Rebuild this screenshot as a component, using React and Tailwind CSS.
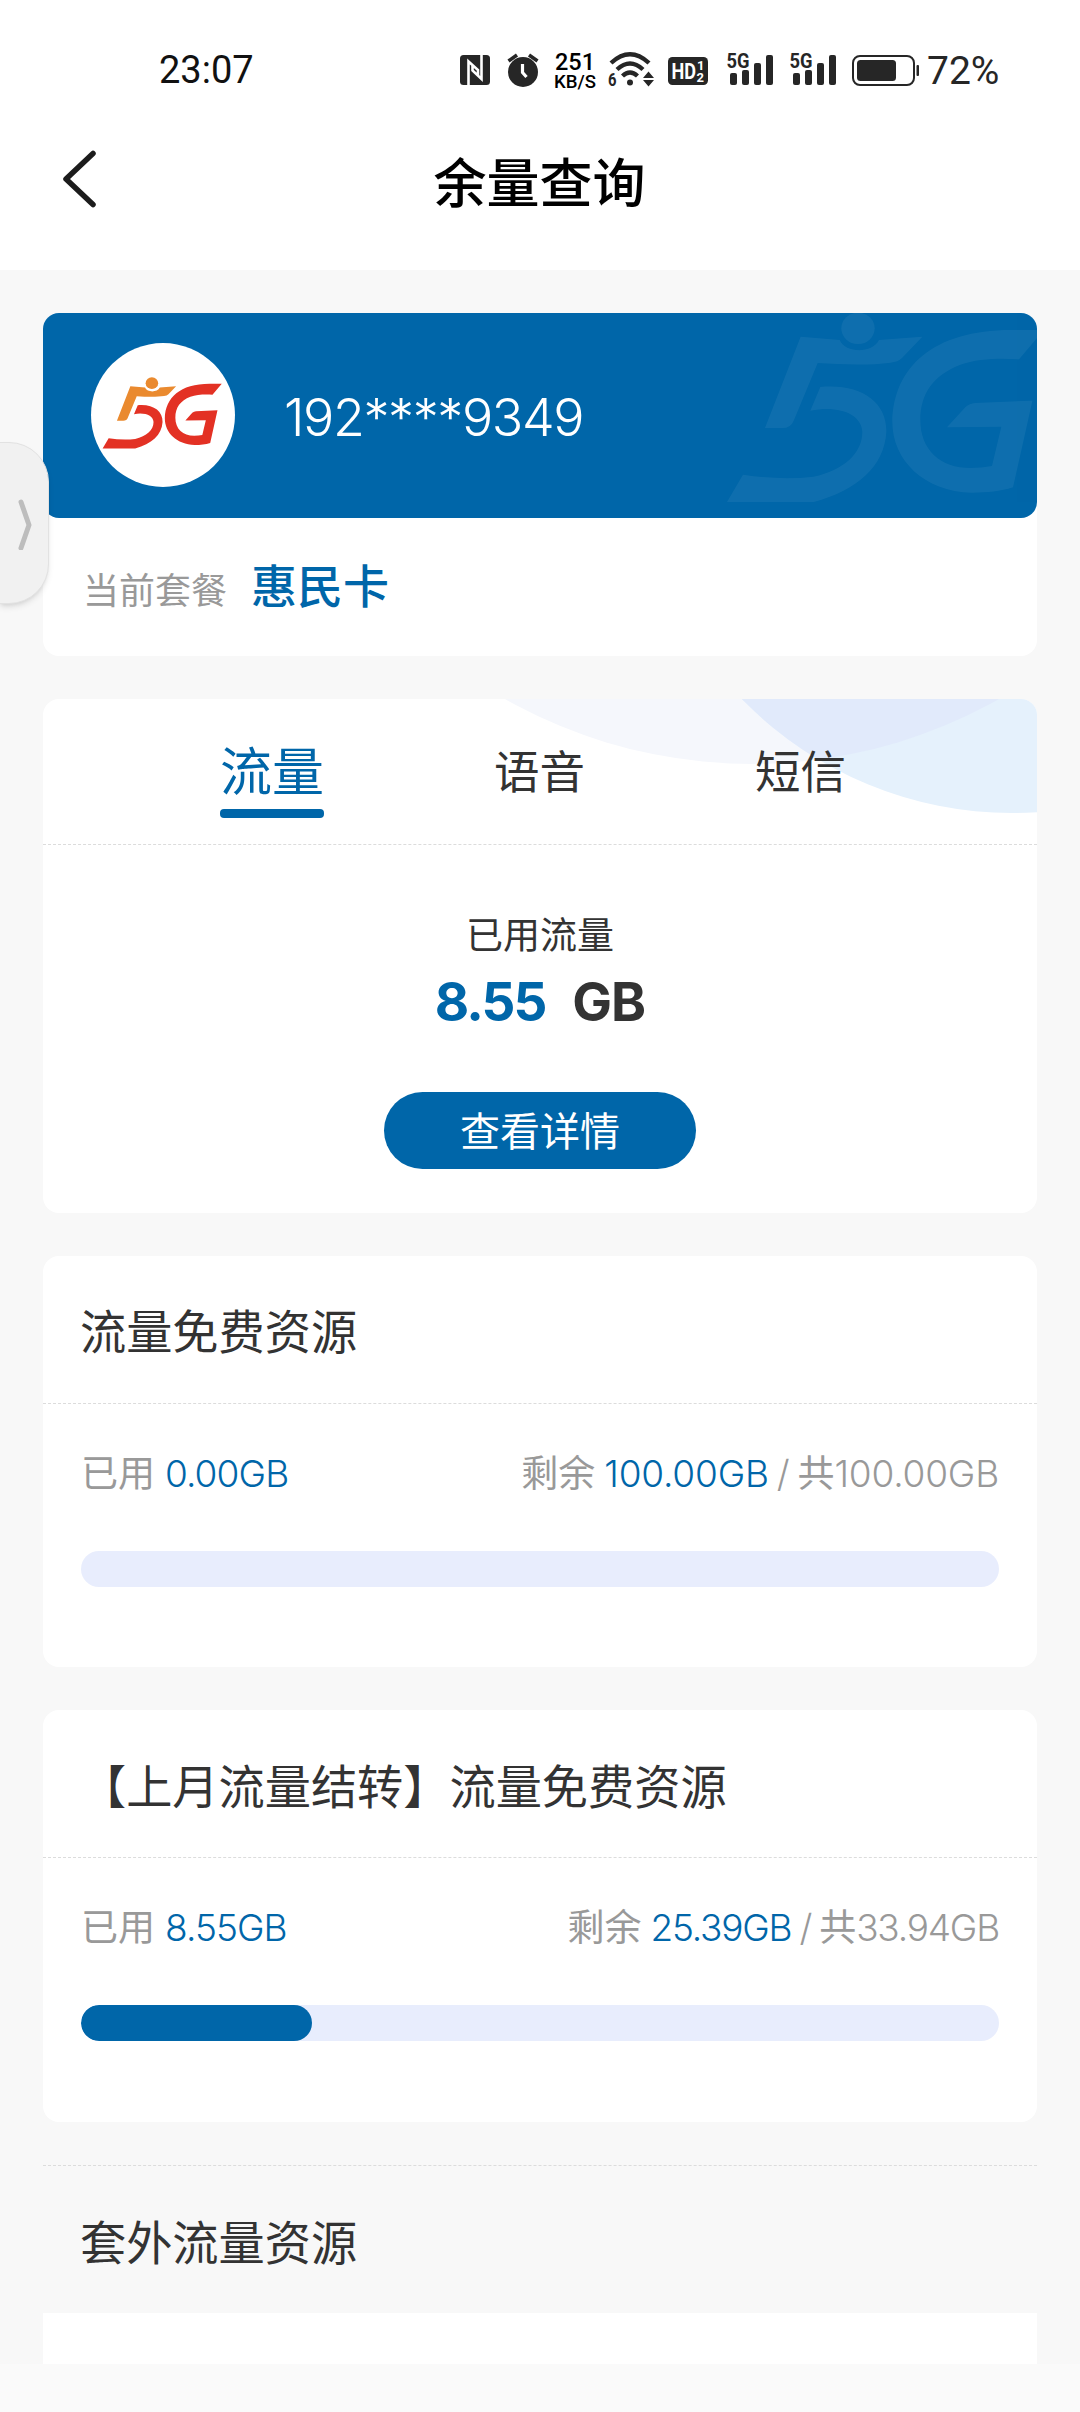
const tabs = ['流量', '语音', '短信']

const resources = [
  { title: '流量免费资源', used: '0.00GB', left: '100.00GB', total: '100.00GB', percent: 0, spacing: 'tracking-[-0.200px]' },
  { title: '【上月流量结转】流量免费资源', used: '8.55GB', left: '25.39GB', total: '33.94GB', percent: 25.2, spacing: 'tracking-[-1.200px]' },
]

function LogoShape({ body, main }) {
  return (
    <>
      <ellipse cx="773" cy="115" rx="50" ry="47" fill={body} />
      <path
        fill={body}
        d="M601 140L718 150C735 190 815 192 836 150L966 140L905 204Q893 216 870 218C810 226 730 224 652 219L580 392Q572 414 545 414L494 414Z"
      />
      <path
        fill={main}
        d="M660 291C780 280 860 335 858 425C852 530 770 600 640 636L380 636L428 554C500 565 570 568 640 560C730 540 786 490 786 425C784 375 720 345 630 362Z"
      />
      <path
        fill={main}
        d="M1330 120L1256 208C1200 204 1130 206 1080 224C1000 255 960 310 960 390C960 480 1020 534 1110 534Q1145 534 1175 528L1203 410L1040 412L1095 352Q1108 340 1125 339L1296 332L1238 592C1200 604 1160 608 1115 608C970 604 876 510 876 395C880 230 1000 118 1240 120Z"
      />
    </>
  )
}

function Signal() {
  return (
    <svg className="ml-[17px] h-10 w-[46px] shrink-0" viewBox="0 0 46 40" fill="#262626">
      <text x="-0.5" y="19" fontFamily="Roboto" fontWeight="700" fontSize="21" textLength="23" lengthAdjust="spacingAndGlyphs">5G</text>
      <rect x="3" y="24" width="7" height="12" rx="2" />
      <rect x="15" y="21" width="7" height="15" rx="2" />
      <rect x="27" y="14" width="7" height="22" rx="2" />
      <rect x="39" y="6" width="7" height="30" rx="2" />
    </svg>
  )
}

function StatusBar() {
  return (
    <div className="flex h-[138px] items-center pl-[159px] text-[#111]">
      <div className="w-[301px] pt-[2px] text-[38px] leading-10">23:07</div>
      {/* NFC */}
      <svg className="h-10 w-[30px] shrink-0" viewBox="0 0 30 40">
        <rect y="6" width="30" height="30" rx="3.5" fill="#262626" />
        <path d="M8.500 37V12.500L18 21V27M21.500 5V30L12.500 21.500V16" fill="none" stroke="#fff" strokeWidth="2.600" />
      </svg>
      {/* alarm */}
      <svg className="ml-[17px] h-10 w-8 shrink-0" viewBox="0 0 32 40">
        <circle cx="16" cy="23" r="15" fill="#262626" />
        <path d="M1.500 12L10 6M30.500 12L22 6" stroke="#262626" strokeWidth="3.600" />
        <path d="M15.500 15V23.500L19.500 28" fill="none" stroke="#fff" strokeWidth="3.200" />
      </svg>
      <svg className="ml-[14px] h-12 w-[44px] shrink-0" viewBox="0 0 44 48" fill="#000" fontFamily="Roboto" fontWeight="500">
        <text x="2" y="25" fontSize="24" textLength="40" lengthAdjust="spacingAndGlyphs">251</text>
        <text x="1" y="42.500" fontSize="17.500" textLength="42" lengthAdjust="spacingAndGlyphs">KB/S</text>
      </svg>
      {/* wifi 6 */}
      <svg className="ml-[11px] h-10 w-[46px] shrink-0" viewBox="0 0 46 40" fill="#262626">
        <path d="M3 14Q22 -3.500 41 14M9 20.500Q22 8.500 35 20.500M14.500 27Q22 20 29.500 27" fill="none" stroke="#262626" strokeWidth="4.400" />
        <circle cx="22" cy="33.500" r="3" />
        <path d="M40.500 22.500L46 29H35ZM40.500 37.500L46 31H35Z" />
        <text x="0" y="36.500" fontFamily="Roboto" fontWeight="700" fontSize="18.500" textLength="8.500" lengthAdjust="spacingAndGlyphs">6</text>
      </svg>
      {/* HD voice */}
      <svg className="ml-[14px] h-10 w-10 shrink-0" viewBox="0 0 40 40" fontFamily="Roboto" fontWeight="700">
        <rect y="8" width="40" height="28" rx="4.500" fill="#262626" />
        <g fill="#fff">
          <text x="3.500" y="30" fontSize="21.500" textLength="24.500" lengthAdjust="spacingAndGlyphs">HD</text>
          <text x="29" y="20.500" fontSize="13">1</text>
          <text x="28.500" y="33" fontSize="13">2</text>
        </g>
      </svg>
      <div className="ml-[2px] flex">
        <Signal />
        <Signal />
      </div>
      {/* battery */}
      <svg className="ml-[16px] h-10 w-[67px] shrink-0" viewBox="0 0 67 40" fill="#262626">
        <rect x="1" y="7" width="61" height="29" rx="7" fill="none" stroke="#262626" strokeWidth="2" />
        <rect x="5" y="11" width="39" height="21" rx="3.500" />
        <rect x="64.500" y="16" width="2.500" height="11" rx="1" />
      </svg>
      <div className="ml-[8px] pt-[3px] text-[39px] leading-10 text-[#262626]">72%</div>
    </div>
  )
}

function TitleBar() {
  return (
    <div className="flex h-[132px] items-start">
      <svg className="mt-[12px] ml-[60px] h-[58px] w-10" viewBox="0 0 40 58" fill="none" stroke="#1c1c1c" strokeWidth="5.500">
        <path d="M33 3.500L6 29L33 54.500" strokeLinecap="round" strokeLinejoin="round" />
      </svg>
      <h1 className="mt-[17px] w-[879px] text-center text-[53px] leading-[60px] font-medium text-black">余量查询</h1>
    </div>
  )
}

function AccountCard() {
  return (
    <section className="rounded-2xl bg-white">
      <div className="relative flex h-[205px] items-center overflow-hidden rounded-2xl bg-[#0066a9] pl-12">
        <svg className="absolute top-0 right-0 h-[189px] w-[310px] opacity-[0.055]" viewBox="380 69 930 567">
          <LogoShape body="#fff" main="#fff" />
        </svg>
        <div className="-mt-[2px] flex size-36 items-center justify-center rounded-full bg-white">
          <svg className="-mt-[3px] -ml-[2px] h-[74px] w-[121px]" viewBox="375 63 965 580">
            <LogoShape body="#ea8a2f" main="#e33124" />
          </svg>
        </div>
        <span className="mt-[4px] ml-[49px] font-[Inter] text-[52px] leading-none font-[350] tracking-[-1.400px] text-white">192****9349</span>
      </div>
      <div className="flex h-[138px] items-center pl-[40px]">
        <span className="mt-[9px] text-[36px] text-[#999]">当前套餐</span>
        <span className="ml-[24px] text-[46px] font-medium text-[#0066a9]">惠民卡</span>
      </div>
    </section>
  )
}

function UsageCard() {
  return (
    <section className="relative h-[514px] overflow-hidden rounded-2xl bg-white">
      <svg className="absolute top-0 right-0 h-[116px] w-[540px]" viewBox="497 699 540 116">
        <circle cx="752" cy="262" r="502" fill="#f5f7fc" />
        <circle cx="1012" cy="436" r="377" fill="#e5f1fc" />
        <clipPath id="lens">
          <circle cx="752" cy="262" r="502" />
        </clipPath>
        <circle cx="1012" cy="436" r="377" fill="#e1eafb" clipPath="url(#lens)" />
      </svg>
      <div className="relative flex h-[146px] items-start gap-[170px] border-b border-dashed border-[#dcdcdc] pt-[40px] pl-[177px]">
        {tabs.map((tab, i) => (
          <div
            key={tab}
            className={
              i === 0
                ? 'flex flex-col text-[52px] leading-[70px] text-[#0066a9] after:h-[9px] after:rounded after:bg-[#0066a9]'
                : 'text-[45.500px] leading-[70px] text-[#333]'
            }
          >
            {tab}
          </div>
        ))}
      </div>
      <div className="flex flex-col items-center">
        <p className="mt-[68px] text-[37px] leading-[48px] text-[#333]">已用流量</p>
        <p className="mt-[11px] flex gap-[27px] font-[Inter] text-[53px] leading-[60px] font-bold text-[#333]">
          <span className="tracking-[-2px] text-[#0066a9]">8.55</span>
          <span className="tracking-[-1px]">GB</span>
        </p>
        <button className="mt-[60px] h-[77px] w-[312px] rounded-full bg-[#0066a9] pt-[5px] text-[40px] leading-[72px] text-white">查看详情</button>
      </div>
    </section>
  )
}

function ResourceCard({ item }) {
  return (
    <section className="h-[412px] rounded-2xl bg-white">
      <h2 className="flex h-[148px] items-center border-b border-dashed border-[#dcdcdc] pt-[10px] pl-[37px] text-[46.200px] text-[#333]">
        {item.title}
      </h2>
      <div className="px-[38px] pt-[43px]">
        <div className="flex justify-between font-[Inter,'Noto_Sans_CJK_SC'] text-[37px] leading-[54px] font-[350] text-[#999]">
          <span className="tracking-[-0.900px]">
            <span className="font-normal tracking-normal">已用</span>
            <span className="ml-[10px] text-[#0066a9]">{item.used}</span>
          </span>
          <span className={item.spacing}>
            <span className="font-normal tracking-normal">剩余</span>
            <span className="ml-[9px] text-[#0066a9]">{item.left}</span>
            <span className="mx-[8px]">/</span>
            <span className="font-normal tracking-normal">共</span>
            {item.total}
          </span>
        </div>
        <div className="mt-[50px] h-9 overflow-hidden rounded-full bg-[#e8edfd]">
          <div className="h-full rounded-full bg-[#0066a9]" style={{ width: `${item.percent}%` }} />
        </div>
      </div>
    </section>
  )
}

export default function App() {
  return (
    <div className="relative flex h-[2412px] w-[1080px] flex-col overflow-hidden bg-[#fafafa] font-[Roboto,'Noto_Sans_CJK_SC',sans-serif]">
      <header className="bg-white">
        <StatusBar />
        <TitleBar />
      </header>
      <main className="flex h-[2094px] flex-col gap-[43px] bg-[#f8f8f8] px-[43px] pt-[43px]">
        <AccountCard />
        <UsageCard />
        {resources.map((item) => (
          <ResourceCard key={item.title} item={item} />
        ))}
        <section>
          <h2 className="flex h-[148px] items-center border-t border-dashed border-[#dcdcdc] pt-[10px] pl-[37px] text-[46.200px] text-[#333]">
            套外流量资源
          </h2>
          <div className="h-[51px] bg-white" />
        </section>
      </main>
      {/* edge drawer handle */}
      <div className="absolute top-[442px] -left-px flex h-[162px] w-[50px] items-center justify-end rounded-r-[40px] border border-[#e2e2e2] bg-[#f1f1f1] pr-[16px] shadow-md">
        <svg className="h-[54px] w-[16px]" viewBox="0 0 16 54" fill="none" stroke="#bdbdbd" strokeWidth="5">
          <path d="M5 6L13 29L5 52" strokeLinecap="round" strokeLinejoin="round" />
        </svg>
      </div>
    </div>
  )
}
